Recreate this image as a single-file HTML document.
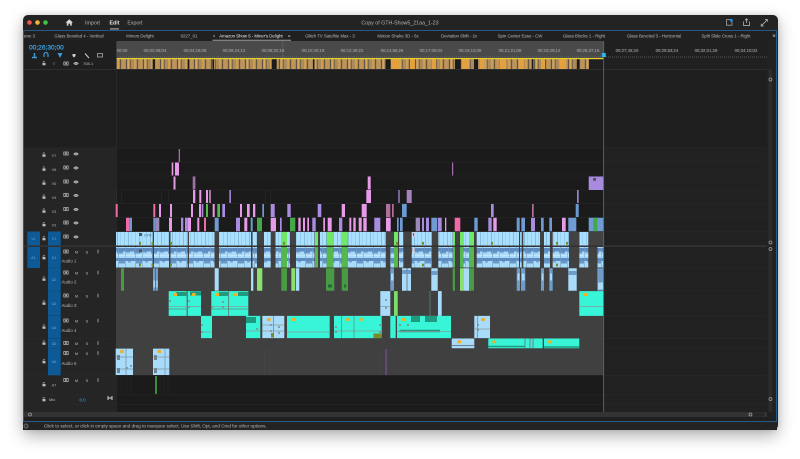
<!DOCTYPE html>
<html><head><meta charset="utf-8"><style>
html,body{margin:0;padding:0;width:800px;height:459px;background:#fff;overflow:hidden}
#w{position:absolute;left:22.5px;top:15px;width:755px;height:415px;border-radius:5px;background:#232323;box-shadow:0 6px 16px rgba(0,0,0,.3),0 0 6px rgba(0,0,0,.12)}
svg{position:absolute;left:0;top:0;filter:blur(.3px)}
text{font-family:"Liberation Sans",sans-serif;font-size:4.3px;fill:#a6a6a6;stroke:#a6a6a6;stroke-width:.06px}
path{fill:none}
</style></head><body><div id="w"></div>
<svg width="800" height="459" viewBox="0 0 800 459" xmlns="http://www.w3.org/2000/svg">
<defs>
<pattern id="pv" patternUnits="userSpaceOnUse" x="116" y="232" width="11" height="13"><rect width="11" height="13" fill="#a9e0ff"/><rect x="1" width=".8" height="13" fill="#7cb4d4"/><rect x="4.5" width=".5" height="13" fill="#8cc4e4"/><rect x="8" width=".6" height="13" fill="#86bede"/></pattern>
<pattern id="pa" patternUnits="userSpaceOnUse" x="116" y="247" width="17" height="21"><rect width="17" height="21" fill="#a9dcfa"/><rect y="1" width="17" height="3.5" fill="#5f8cc0"/><rect y="4.5" x="1" width="6" height="2" fill="#6a96c8"/><rect y="4.5" x="10" width="4" height="1.3" fill="#7ba4d0"/><rect y="8" width="17" height="1" fill="#c4e6f8"/><rect y="11" width="17" height="3" fill="#5f8cc0"/><rect y="14" x="3" width="6" height="2.5" fill="#6a96c8"/><rect y="14" x="12" width="3" height="1.5" fill="#7ba4d0"/><rect x="2" width=".6" height="21" fill="#6f9cc4"/><rect x="9" width=".5" height="21" fill="#6f9cc4"/></pattern>
<pattern id="ps" patternUnits="userSpaceOnUse" x="116" y="59" width="17" height="10"><rect width="17" height="10" fill="#ad8a5a"/><rect x="1" width="2" height="10" fill="#d09c4e"/><rect x="4" width="1" height="10" fill="#65583f"/><rect x="6" width="3" height="10" fill="#bf9458"/><rect x="10" width="1" height="10" fill="#5e5344"/><rect x="11.5" width="1.5" height="10" fill="#d6a656"/><rect x="14" width=".8" height="10" fill="#6d6048"/></pattern>
<g id="lock"><rect x="-1.5" y="-.6" width="3" height="2.4" fill="#bbb"/><path d="M-.9 -.6V-1.5a.9 .9 0 0 1 1.8 0" stroke="#bbb" stroke-width=".5"/></g>
<g id="film"><rect x="-2.2" y="-1.5" width="4.4" height="3" fill="none" stroke="#c0c0c0" stroke-width=".7"/><rect x="-.8" y="-.8" width="1.6" height="1.6" fill="#c0c0c0"/></g>
<g id="eye"><path d="M-2.2 0Q0 -2.2 2.2 0Q0 2.2 -2.2 0z" stroke="#cdcdcd" stroke-width=".7"/><circle r=".7" fill="#cdcdcd"/></g>
<g id="mic"><rect x="-.8" y="-2" width="1.6" height="4" rx=".8" fill="#6c6c6c"/></g>
<g id="knob"><circle r="1.5" fill="none" stroke="#9a9a9a" stroke-width=".8"/></g>
</defs>

<!-- top bar -->
<circle cx="29.5" cy="22.5" r="2.3" fill="#ee5a50"/><circle cx="37.5" cy="22.5" r="2.3" fill="#f2b52e"/><circle cx="45.5" cy="22.5" r="2.3" fill="#3ec24a"/>
<path d="M65.5 22.6L69.3 19.3L73 22.6H71.8V25.6H70.2V23.6H68.4V25.6H66.8V22.6z" style="fill:#d8d8d8"/>
<text x="92.5" y="24.5" text-anchor="middle" style="font-size:5.3px">Import</text>
<text x="114.5" y="24.5" text-anchor="middle" style="font-size:5.3px;font-weight:bold;fill:#e4e4e4">Edit</text>
<text x="135" y="24.5" text-anchor="middle" style="font-size:5.3px">Export</text>
<rect x="110" y="28.3" width="9" height="1.2" fill="#a8a8a8"/>
<text x="400" y="24.5" text-anchor="middle" style="font-size:5.3px">Copy of GTH-Show5_21aa_1-23</text>
<rect x="726.5" y="19.7" width="5.5" height="5.5" fill="none" stroke="#b8b8b8" stroke-width=".7"/><rect x="730" y="19" width="2.6" height="2.6" fill="#2a90f0"/>
<path d="M743.5 21.5V25.5H749.5V21.5M746.5 23V19M745 20.3L746.5 18.8L748 20.3" stroke="#c8c8c8" stroke-width=".7"/>
<path d="M761.5 25.7L767 20M765 19.5H767.3V21.8M761.2 23.7V26H763.5" stroke="#c8c8c8" stroke-width=".7"/>

<!-- panel -->
<rect x="23.5" y="30.5" width="753" height="391" fill="#202020"/>
<rect x="24" y="41" width="92" height="371" fill="#252525"/>
<rect x="116" y="69" width="488" height="343" fill="#1b1b1b"/>
<rect x="604" y="69" width="163" height="343" fill="#212121"/>
<rect x="24" y="41" width="92" height="28" fill="#1f1f1f"/>
<rect x="24" y="69" width="92" height="79" fill="#1f1f1f"/>
<rect x="116" y="69" width="488" height="79" fill="#1e1e1e"/>
<rect x="604" y="69" width="163" height="79" fill="#1f1f1f"/>
<rect x="767" y="41" width="9" height="371" fill="#222"/>
<rect x="768.5" y="69" width="3.5" height="176" fill="#2c2c2c"/><rect x="768.5" y="247" width="3.5" height="165" fill="#2c2c2c"/>

<!-- tabs -->
<g text-anchor="middle">
<text x="29" y="37.5">ame 3</text><text x="79" y="37.5">Glass Beveled 4 - Vertical</text><text x="140" y="37.5">Miners Delight</text><text x="189" y="37.5">0227_01</text><text x="214" y="37.5">×</text>
<text x="251" y="37.5" style="fill:#d8d8d8;stroke:#d8d8d8">Amazon Show 5 - Miner's Delight</text><text x="289" y="37.5">≡</text>
<text x="330" y="37.5">Glitch TV Satellite Max - 3</text><text x="398" y="37.5">Motion Shake 3D - 5x</text><text x="459" y="37.5">Deviation Shift - 2x</text><text x="520" y="37.5">Spin Center Ease - CW</text><text x="584" y="37.5">Glass Blocks 1 - Right</text><text x="654" y="37.5">Glass Beveled 3 - Horizontal</text><text x="726" y="37.5">Split Slide Cross 1 - Right</text>
<text x="774" y="37.5" style="font-size:6px;fill:#ccc">»</text>
</g>
<rect x="212.5" y="39.7" width="78.5" height="1.2" fill="#8a8a8a"/>

<!-- ruler -->
<rect x="116" y="41" width="488" height="17.5" fill="#4a4a4a"/>
<rect x="282.5" y="41" width=".7" height="17" fill="#666"/>
<path d="M116 57H767" stroke="#777" stroke-width="1" stroke-dasharray=".6 1.4"/>
<g text-anchor="middle" style="font-size:4px">
<text x="122" y="52">00;00</text><text x="155" y="52">00;02;08;04</text><text x="195" y="52">00;04;16;08</text><text x="234" y="52">00;06;24;12</text><text x="273" y="52">00;08;32;16</text><text x="313" y="52">00;10;40;18</text><text x="352" y="52">00;12;48;22</text><text x="392" y="52">00;14;56;26</text><text x="431" y="52">00;17;05;02</text><text x="470" y="52">00;19;13;06</text><text x="510" y="52">00;21;21;08</text><text x="549" y="52">00;23;29;12</text><text x="588" y="52">00;25;37;16</text><text x="627" y="52">00;27;45;20</text><text x="667" y="52">00;29;53;24</text><text x="706" y="52">00;32;01;28</text><text x="746" y="52">00;34;10;02</text>
</g>
<!-- strip -->
<rect x="116" y="59" width="473" height="10" fill="url(#ps)"/>
<path stroke="#e3a03c" stroke-width="10" d="M391 64H400M410 64H415M432 64H436M462 64H468M480 64H484M500 64H506M520 64H524M541 64H545M560 64H566"/>
<path stroke="#1b1b1b" stroke-width="10" d="M152.7 64H155M187.7 64H189.3M212.5 64H214M271.7 64H276.7M313 64H314.5M385.7 64H390.7M455 64H460.7M474 64H478M531.7 64H533.3M576.7 64H579.3"/>
<rect x="116" y="58" width="488" height="1.2" fill="#e3d22a"/>
<rect x="24" y="69" width="743" height="1" fill="#2e2e2e"/>
<rect x="116" y="41" width=".6" height="371" fill="#2e2e2e"/>

<!-- header controls -->
<text x="29" y="49.5" style="font-size:6.6px;fill:#3ea6e8;stroke:#3ea6e8;stroke-width:.2px">00;26;30;00</text>
<path d="M32 57.5H37M34.5 57.5V53" stroke="#3a9ad8" stroke-width="1.5"/>
<path d="M44 57V54.5a2 2 0 0 1 4 0V57" stroke="#3a9ad8" stroke-width="1.2"/>
<path d="M57.5 53H62.5L60 58z" style="fill:#3a9ad8"/>
<path d="M72.5 54H75.5V56L74 57.5L72.5 56z" style="fill:#cfcfcf"/>
<path d="M85 53.5L89 58" stroke="#cfcfcf" stroke-width="1"/>
<rect x="97.5" y="53.5" width="5" height="3.5" fill="none" stroke="#aaa" stroke-width=".8"/>
<use href="#lock" x="44" y="63.5"/><circle cx="54" cy="63.5" r="1" fill="none" stroke="#666" stroke-width=".5"/><use href="#film" x="66" y="63.5"/><use href="#eye" x="76" y="63.5"/>
<text x="83" y="65" style="font-size:4px">708-1</text>

<!-- audio bg -->
<rect x="116" y="231.5" width="488" height="14" fill="#424242"/>
<rect x="116" y="247" width="488" height="128" fill="#404040"/>
<rect x="24" y="245.3" width="743" height="1.7" fill="#333"/>
<!-- track lines -->
<path stroke="#2a2a2a" stroke-width=".6" d="M24 148H767M24 162H767M24 176H767M24 190H767M24 203.5H767M24 217.5H767M24 231.5H767M24 268H767M24 291H767M24 315.7H767M24 338.3H767M24 348.5H767M24 375.3H767M24 395H767M24 404.5H767"/>
<path stroke="#4c4c4c" stroke-width=".5" d="M116 268H604M116 291H604M116 315.7H604M116 338.3H604M116 348.5H604"/>

<!-- V7-V6-V5 -->
<path stroke="#a070a8" stroke-width="13" d="M178.7 155.5H180M192.7 183H195.4"/>
<path stroke="#a86cb0" stroke-width="13" d="M452 169H453.2"/>
<path stroke="#e79ae8" stroke-width="13" d="M171.7 169H173.3M175 169H179M173.5 183H175.5M367.7 183H370.7"/>
<rect x="588.7" y="176.5" width="14.8" height="13.5" fill="#a88ae0"/><rect x="593" y="178" width="3" height="2.8" fill="#555"/>
<!-- V4 -->
<path stroke="#e79ae8" stroke-width="13" d="M193 196.5H195.3M199.3 196.5H201.3M206 196.5H208M209.3 196.5H210.7M366.3 196.5H371"/>
<path stroke="#9a82cc" stroke-width="13" d="M229.3 196.5H231M398.3 196.5H399.7M577 196.5H578.7"/>
<path stroke="#a583b8" stroke-width="13" d="M406.7 196.5H411.7"/>
<path stroke="#2c2c2c" stroke-width="13" d="M116.5 196.5H117M121 196.5H121.6M161 196.5H161.6M168 196.5H168.6M265 196.5H265.6M270 196.5H270.6"/>
<!-- V3 -->
<path stroke="#f06aa8" stroke-width="13" d="M115.7 210.5H117.7M153.3 210.5H155.3"/>
<path stroke="#e79ae8" stroke-width="13" d="M159 210.5H161M170 210.5H172M191 210.5H193M199 210.5H201M212.7 210.5H214.7M240 210.5H242M247 210.5H249.7M253 210.5H255.3M341.7 210.5H345M361.7 210.5H366.7"/>
<path stroke="#a98ce0" stroke-width="13" d="M201.7 210.5H203.3M222.3 210.5H225M270.7 210.5H274.7M287.3 210.5H290.7M317.7 210.5H321.3M491 210.5H493.7"/>
<path stroke="#57b84a" stroke-width="13" d="M206 210.5H208M217.3 210.5H220"/>
<path stroke="#6a9ad0" stroke-width="13" d="M262.3 210.5H264M402 210.5H406.7M575.7 210.5H578.7"/>
<path stroke="#b0709a" stroke-width="13" d="M386 210.5H390.3M392 210.5H393.7M532 210.5H533.7"/>
<!-- V2 -->
<path stroke="#f06aa8" stroke-width="13.5" d="M126 224.5H129.3M204 224.5H206M454.7 224.5H460.3"/>
<path stroke="#6d9bd2" stroke-width="13.5" d="M129.3 224.5H132M153.3 224.5H155.7M214.7 224.5H218.7M250.7 224.5H252.7M397 224.5H398.7M400 224.5H402.7M431.3 224.5H437.3M474.3 224.5H477.7M516.7 224.5H519.7M521.3 224.5H525M541 224.5H543.7M549.3 224.5H552M568.3 224.5H576.3M588.7 224.5H603.5"/>
<path stroke="#9a88b8" stroke-width="13.5" d="M155.7 224.5H159.3M415.7 224.5H420"/>
<path stroke="#e79ae8" stroke-width="13.5" d="M169 224.5H172M187.7 224.5H191M197.3 224.5H199.3M244.3 224.5H247.3M270.7 224.5H276M298.3 224.5H300.7M303 224.5H305M307.3 224.5H309M323.3 224.5H325M327.7 224.5H331.7M349.3 224.5H351.3M353.3 224.5H355.7M358.7 224.5H361.7M363.3 224.5H366.7M386 224.5H390.7M445 224.5H446.3M493.3 224.5H496.7M562 224.5H565.7"/>
<path stroke="#a98ce0" stroke-width="13.5" d="M181 224.5H183.3M185 224.5H187.7M236 224.5H240M280 224.5H281.7M312.3 224.5H315.7M339 224.5H342.3M374.3 224.5H380.3M422 224.5H424M426 224.5H429M438 224.5H441.7M488.3 224.5H491.7M531 224.5H535"/>
<path stroke="#45a848" stroke-width="13.5" d="M257 224.5H262M290 224.5H295.3M593.3 224.5H597.3"/>

<!-- V1 -->
<path stroke-width="13.5" d="M116 238.7H152.7M154 238.7H169M170.5 238.7H187.7M189 238.7H214.5M219 238.7H251M252.5 238.7H257M264 238.7H270.7M275.5 238.7H281M287 238.7H290M296 238.7H314.5M320 238.7H326.7M333.3 238.7H341.7M347.7 238.7H385.7M399 238.7H403.3M411.7 238.7H431.7M438.3 238.7H452.7M463.3 238.7H469M476.7 238.7H519M520 238.7H521.7M523.3 238.7H540M544 238.7H550M552.7 238.7H569M579.3 238.7H588.3" style="stroke:url(#pv)"/>
<path stroke="#6fe868" stroke-width="13.5" d="M281 238.7H287M315 238.7H318M326.7 238.7H333.3M341.7 238.7H347.7M394 238.7H398M453 238.7H455M460 238.7H463.3M469 238.7H474"/>
<rect x="139" y="233" width="3" height="3" fill="#555"/><text x="144" y="236.5" style="font-size:3.5px;fill:#456;stroke:none">GTH</text>
<path stroke="#7c8a2a" stroke-width="2.8" d="M139 243.3H141M151.5 243.3H153.5M170 243.3H172M283 243.3H285M396 243.3H398M422 243.3H424M491 243.3H493M556 243.3H558M566 243.3H568"/>
<rect x="412.5" y="232" width="2" height="5" fill="#f0d0d0"/><rect x="413" y="233" width="1" height="3" fill="#e03030"/>

<!-- A1 -->
<path stroke-width="20.5" d="M116 257.3H152.7M154 257.3H169M170.5 257.3H187.7M189 257.3H214.5M219 257.3H251M252.5 257.3H257M264 257.3H270.7M275.5 257.3H281M287 257.3H290M296 257.3H314.5M320 257.3H326.7M333.3 257.3H341.7M347.7 257.3H385.7M390.3 257.3H394M399 257.3H403.3M411.7 257.3H431.7M438.3 257.3H452.7M463.3 257.3H469M476.7 257.3H519M520 257.3H521.7M523.3 257.3H540M544 257.3H550M552.7 257.3H569M579.3 257.3H588.3M597.5 257.3H603.5" style="stroke:url(#pa)"/>
<path stroke="#54b84e" stroke-width="20.5" d="M281 257.3H287M315 257.3H318M326.7 257.3H333.3M341.7 257.3H347.7M394 257.3H398M453 257.3H455M460 257.3H463.3M469 257.3H474"/>
<rect x="139" y="249.5" width="3" height="3" fill="#555"/>
<path stroke="#7c8a2a" stroke-width="2.8" d="M139 265H141M151.5 265H153.5M170 265H172M422 265H424M556 265H558"/>
<rect x="412.5" y="248" width="2" height="5" fill="#f0d0d0"/>

<!-- A2 -->
<path stroke="#4a9a45" stroke-width="22.5" d="M121 279.5H124M281.3 279.5H287M326 279.5H334.3M341.7 279.5H348M452.7 279.5H455M469 279.5H474"/>
<path stroke="#8ce070" stroke-width="22.5" d="M257 279.5H262.3M291.3 279.5H295.3M460 279.5H464"/>
<path stroke="#a9dcfa" stroke-width="22.5" d="M214.7 279.5H218.7M251 279.5H253.3M296 279.5H299.3M402 279.5H406.7M407.3 279.5H411M431.3 279.5H437.7M464 279.5H469M568.3 279.5H576.7"/>
<path stroke="#6f9cc9" stroke-width="22.5" d="M153 279.5H155.5M156 279.5H158M390.3 279.5H394M516.7 279.5H520M521 279.5H525.3M541 279.5H544M549.3 279.5H552.7M597.3 279.5H603.7"/>
<path stroke="#a9dcfa" stroke-width="7" d="M153.5 284H155M156.3 284H157.6M391 277H393.4M517.5 277H519.4M522 277H524.6M541.8 277H543.3M550 277H552M598 286H603"/>
<path stroke="#6f9cc9" stroke-width="4" d="M402 272H406.7M407.3 272H411M431.3 273H437.7M568.3 273H576.7"/>
<path stroke="#1e6b34" stroke-width="3" d="M328 286H332M344 286H346"/>

<!-- A3 -->
<path stroke="#38f5d8" stroke-width="24.7" d="M168.7 303.5H186.7M187.7 303.5H201M211.3 303.5H228.3M229 303.5H248.3M579.3 303.5H603.7"/>
<path stroke="#a9dcfa" stroke-width="24.7" d="M380.3 303.5H390.3M438 303.5H441.7"/>
<path stroke="#7ce068" stroke-width="24.7" d="M394 303.5H397.7"/>
<path stroke="#1f9a80" stroke-width="4" d="M176 294H186.7M190 293.5H201M219 294H228.3M238 294H248.3"/>
<path stroke="#8a9a9a" stroke-width=".7" d="M168.7 306.5H201M211.3 306.5H248.3M579.3 306.5H603.7M380.3 306.5H390.3"/>
<path stroke="#5c8a7c" stroke-width=".7" d="M186.9 291V315.7M228.7 291V315.7M168.7 309H186.7M211.3 309H248.3M430 291V338"/>

<!-- A4 -->
<path stroke="#38f5d8" stroke-width="22.3" d="M201 327H212M246 327H260.3M287 327H329.7M334 327H381.7M390.3 327H395.7M397 327H451"/>
<path stroke="#a9dcfa" stroke-width="22.3" d="M262.3 327H284.3M474.3 327H490"/>
<path stroke="#1f9a80" stroke-width="6" d="M246 320H256M411 319H420M425 319H437"/>
<path stroke="#1f9a80" stroke-width="2.5" d="M400 331H440"/>
<path stroke="#8a9a9a" stroke-width=".7" d="M201 332H212M246 331H260.3M262.3 325H284.3M262.3 331H284.3M287 332H329.7M334 331H381.7M397 331.5H451M474.3 329H490"/>
<path stroke="#5c8a7c" stroke-width=".7" d="M273.5 316V338M341.5 316V338M354 316V338M477.5 316V338"/>
<rect x="373.5" y="333.5" width="8" height="4.5" fill="#7d8a2a"/><rect x="271" y="333" width="3" height="4.5" fill="#7c8a2a"/>

<!-- A5 -->
<path stroke="#38f5d8" stroke-width="9.8" d="M488.3 343.4H542.7M544 343.4H579.3"/>
<path stroke="#a9dcfa" stroke-width="9.8" d="M451.7 343.4H474.3"/>
<path stroke="#1f9a80" stroke-width="1.6" d="M488.3 346.5H525M544 347H579.3"/>
<path stroke="#6a7e8a" stroke-width="1" d="M451.7 345.5H474.3M525 338.5V348M530 338.5V348M533 338.5V348"/>

<!-- A6 -->
<path stroke="#a9dcfa" stroke-width="26.4" d="M115.7 361.8H133M153 361.8H169.3"/>
<path stroke="#7c98ac" stroke-width=".8" d="M115.7 369H133M153 369H169.3M115.7 357H133M153 357H169.3M126 349V375M165 349V375"/>
<rect x="117" y="355" width="3" height="5" fill="#6c8494"/><rect x="117" y="368" width="3" height="5" fill="#6c8494"/><rect x="154" y="355" width="3" height="5" fill="#6c8494"/><rect x="154" y="368" width="3" height="5" fill="#6c8494"/>
<path stroke="#6a4a78" stroke-width="26" d="M385.3 362H387"/>
<path stroke="#484848" stroke-width=".7" d="M264.5 349V375M270 349V375M381 349V375"/>
<!-- A7 -->
<path stroke="#3e8a3e" stroke-width="18" d="M155 385H157"/>
<path stroke="#262626" stroke-width=".7" d="M118 376V394M121 376V394M124 376V394M127 376V394M131 376V394M160 376V394M164 376V394M168 376V394"/>

<!-- badges -->
<g fill="#f0b020">
<rect x="173.5" y="293" width="3.6" height="3"/><rect x="192" y="293" width="3.6" height="3"/><rect x="215.5" y="293" width="3.6" height="3"/><rect x="233.2" y="293" width="3.6" height="3"/><rect x="583.5" y="293" width="3.6" height="3"/>
<rect x="267" y="318" width="3.6" height="3"/><rect x="291.5" y="318" width="3.6" height="3"/><rect x="346.2" y="318" width="3.6" height="3"/><rect x="359" y="318" width="3.6" height="3"/><rect x="401.5" y="318" width="3.6" height="3"/><rect x="481.2" y="318" width="3.6" height="3"/>
<rect x="457.5" y="340.3" width="3.6" height="3"/><rect x="492.5" y="340.3" width="3.6" height="3"/><rect x="548.2" y="340.3" width="3.6" height="3"/>
<rect x="120.2" y="350" width="3.6" height="3"/><rect x="157.5" y="350" width="3.6" height="3"/>
</g>
<!-- keyframe dots -->
<g fill="#7e8c90">
<circle cx="170" cy="301" r="1"/><circle cx="189" cy="301" r="1"/><circle cx="189" cy="307" r="1"/><circle cx="212" cy="307" r="1"/><circle cx="223" cy="302" r="1"/><circle cx="223" cy="307" r="1"/><circle cx="202" cy="325" r="1"/><circle cx="202" cy="332" r="1"/><circle cx="271" cy="325" r="1"/><circle cx="271" cy="331" r="1"/><circle cx="257" cy="329" r="1"/><circle cx="279" cy="327" r="1"/><circle cx="279" cy="333" r="1"/><circle cx="336" cy="327" r="1"/><circle cx="336" cy="332" r="1"/><circle cx="380" cy="325" r="1"/><circle cx="380" cy="332" r="1"/><circle cx="400" cy="325" r="1"/><circle cx="400" cy="331" r="1"/><circle cx="408" cy="325" r="1"/><circle cx="408" cy="331" r="1"/><circle cx="386" cy="300" r="1"/><circle cx="386" cy="308" r="1"/><circle cx="478" cy="325" r="1"/><circle cx="478" cy="330" r="1"/><circle cx="127" cy="368" r="1"/><circle cx="131" cy="366" r="1"/><circle cx="155" cy="369" r="1"/>
</g>

<!-- blue patches -->
<path stroke="#0e5a96" stroke-width="14" d="M27.3 238.5H40M48 238.5H60.7"/>
<path stroke="#0e5a96" stroke-width="21" d="M27.3 257.5H40"/>
<rect x="48" y="247" width="12.7" height="128.3" fill="#0e5a96"/>
<path stroke="#0a4878" stroke-width=".6" d="M48 268H60.7M48 291H60.7M48 315.7H60.7M48 338.3H60.7M48 348.5H60.7"/>

<!-- track headers -->
<use href="#lock" x="44" y="155"/><text x="54" y="157" text-anchor="middle" style="font-size:3.6px">V7</text><use href="#film" x="66" y="153.5"/><use href="#eye" x="76" y="154"/>
<use href="#lock" x="44" y="169"/><text x="54" y="171" text-anchor="middle" style="font-size:3.6px">V6</text><use href="#film" x="66" y="167.5"/><use href="#eye" x="76" y="168"/>
<use href="#lock" x="44" y="183"/><text x="54" y="185" text-anchor="middle" style="font-size:3.6px">V5</text><use href="#film" x="66" y="181.5"/><use href="#eye" x="76" y="182"/>
<use href="#lock" x="44" y="197"/><text x="54" y="199" text-anchor="middle" style="font-size:3.6px">V4</text><use href="#film" x="66" y="195"/><use href="#eye" x="76" y="195.5"/>
<use href="#lock" x="44" y="211"/><text x="54" y="213" text-anchor="middle" style="font-size:3.6px">V3</text><use href="#film" x="66" y="209"/><use href="#eye" x="76" y="209.5"/>
<use href="#lock" x="44" y="224.5"/><text x="54" y="226.5" text-anchor="middle" style="font-size:3.6px">V2</text><use href="#film" x="66" y="222.5"/><use href="#eye" x="76" y="223"/>
<text x="33.5" y="240" text-anchor="middle" style="font-size:3.6px;fill:#6ea8d0;stroke:none">V1</text><use href="#lock" x="44" y="238.5"/><text x="54" y="240" text-anchor="middle" style="font-size:3.6px;fill:#6ea8d0;stroke:none">V1</text><use href="#film" x="66" y="236.5"/><use href="#eye" x="76" y="237"/>

<text x="33.5" y="259" text-anchor="middle" style="font-size:3.6px;fill:#6ea8d0;stroke:none">A1</text><use href="#lock" x="44" y="257.5"/><text x="54" y="259" text-anchor="middle" style="font-size:3.6px;fill:#6ea8d0;stroke:none">A1</text>
<use href="#film" x="66" y="251.5"/><text x="76.5" y="253.3" text-anchor="middle" style="font-size:4px">M</text><text x="87" y="253.3" text-anchor="middle" style="font-size:4px">S</text><use href="#mic" x="98" y="251.5"/><text x="61.5" y="262.5" style="font-size:4.4px">Audio 1</text>
<use href="#lock" x="44" y="279"/><text x="54" y="281" text-anchor="middle" style="font-size:3.6px;fill:#6ea8d0;stroke:none">A2</text>
<use href="#film" x="66" y="272.5"/><text x="76.5" y="274.3" text-anchor="middle" style="font-size:4px">M</text><text x="87" y="274.3" text-anchor="middle" style="font-size:4px">S</text><use href="#mic" x="98" y="272.5"/><text x="61.5" y="283.5" style="font-size:4.4px">Audio 2</text>
<use href="#lock" x="44" y="303"/><text x="54" y="305" text-anchor="middle" style="font-size:3.6px;fill:#6ea8d0;stroke:none">A3</text>
<use href="#film" x="66" y="295.5"/><text x="76.5" y="297.3" text-anchor="middle" style="font-size:4px">M</text><text x="87" y="297.3" text-anchor="middle" style="font-size:4px">S</text><use href="#mic" x="98" y="295.5"/><text x="61.5" y="307" style="font-size:4.4px">Audio 3</text>
<use href="#lock" x="44" y="327"/><text x="54" y="329" text-anchor="middle" style="font-size:3.6px;fill:#6ea8d0;stroke:none">A4</text>
<use href="#film" x="66" y="320.5"/><text x="76.5" y="322.3" text-anchor="middle" style="font-size:4px">M</text><text x="87" y="322.3" text-anchor="middle" style="font-size:4px">S</text><use href="#mic" x="98" y="320.5"/><text x="61.5" y="332" style="font-size:4.4px">Audio 4</text>
<use href="#lock" x="44" y="343"/><text x="54" y="345" text-anchor="middle" style="font-size:3.6px;fill:#6ea8d0;stroke:none">A5</text>
<use href="#film" x="66" y="343"/><text x="76.5" y="344.8" text-anchor="middle" style="font-size:4px">M</text><text x="87" y="344.8" text-anchor="middle" style="font-size:4px">S</text><use href="#mic" x="98" y="343"/>
<use href="#lock" x="44" y="361.5"/><text x="54" y="363" text-anchor="middle" style="font-size:3.6px;fill:#6ea8d0;stroke:none">A6</text>
<use href="#film" x="66" y="353"/><text x="76.5" y="354.8" text-anchor="middle" style="font-size:4px">M</text><text x="87" y="354.8" text-anchor="middle" style="font-size:4px">S</text><use href="#mic" x="98" y="353"/><text x="61.5" y="365" style="font-size:4.4px">Audio 6</text>
<use href="#lock" x="44" y="384.5"/><text x="54" y="386.5" text-anchor="middle" style="font-size:3.6px">A7</text>
<use href="#film" x="66" y="380"/><text x="76.5" y="381.8" text-anchor="middle" style="font-size:4px">M</text><text x="87" y="381.8" text-anchor="middle" style="font-size:4px">S</text><use href="#mic" x="98" y="380"/>
<use href="#lock" x="44" y="399.5"/><text x="49" y="401" style="font-size:4px">Mix</text><text x="82.5" y="401.5" text-anchor="middle" style="font-size:4.4px;fill:#2e9ad8;stroke:#2e9ad8">0.0</text>
<path d="M108 396V400M112 396V400M108 398H112" stroke="#ddd" stroke-width=".9"/>

<!-- bottom scroll -->
<rect x="24" y="412" width="743" height="5" fill="#333"/>
<rect x="24" y="417" width="753" height="4.5" fill="#202020"/>
<rect x="752" y="412.5" width="12" height="4" fill="#262626"/>
<use href="#knob" x="30" y="414.5"/><use href="#knob" x="750.5" y="414.5"/>
<use href="#knob" x="770.5" y="79.5"/><use href="#knob" x="770.5" y="242.5"/><use href="#knob" x="770.5" y="249"/><use href="#knob" x="770.5" y="399"/>

<!-- playhead -->
<rect x="603.2" y="41" width=".9" height="371" fill="#2f7498"/>
<rect x="601.8" y="53" width="4" height="4" fill="#2ab4f4"/>

<!-- border -->
<rect x="23.5" y="30.5" width="753" height="391" fill="none" stroke="#2a5f8f" stroke-width=".9"/>
<rect x="23" y="422" width="754" height="8" fill="#232323"/>
<circle cx="26" cy="426" r="2.6" fill="#5a5a5a"/><circle cx="26" cy="426" r="1.2" fill="#333"/>
<text x="44" y="427.7" style="font-size:4.6px">Click to select, or click in empty space and drag to marquee select. Use Shift, Opt, and Cmd for other options.</text>
</svg>
</body></html>
